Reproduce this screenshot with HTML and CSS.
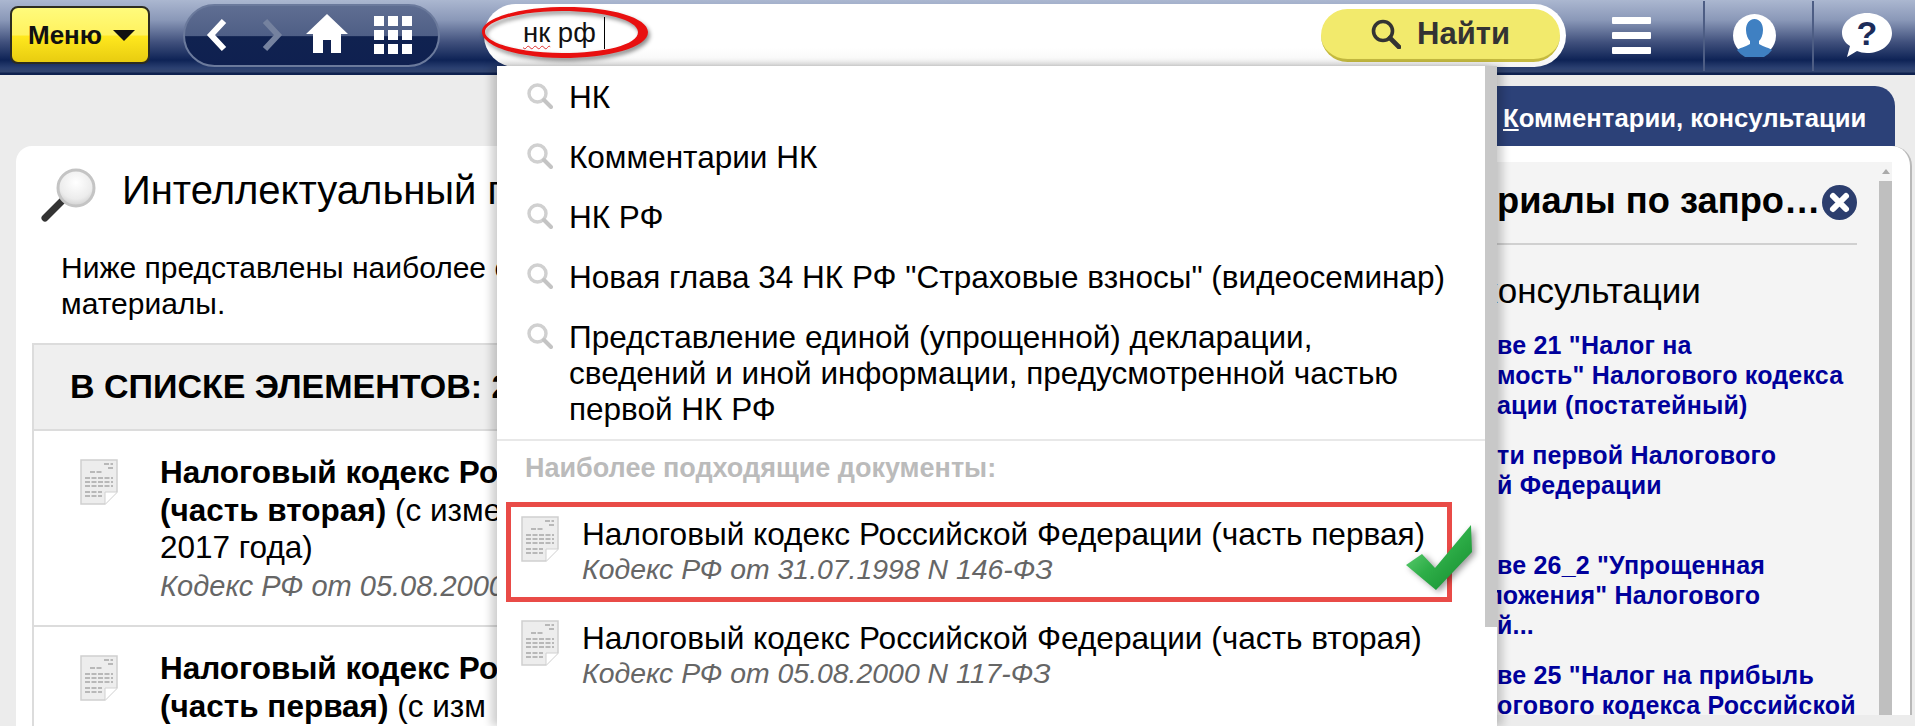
FILE: index.html
```html
<!DOCTYPE html>
<html lang="ru">
<head>
  <meta charset="UTF-8">
  <title>Интеллектуальный поиск</title>
  <link rel="stylesheet" href="styles.css">
</head>
<body>
  <header class="topbar">
    <button class="menu-btn">Меню <span class="menu-arrow"></span></button>

    <div class="nav-pill">
      <svg class="nav-icon back" viewBox="0 0 22 34"><path d="M18 3 L5 17 L18 31" fill="none" stroke="#fff" stroke-width="6"/></svg>
      <svg class="nav-icon fwd" viewBox="0 0 22 34"><path d="M4 3 L17 17 L4 31" fill="none" stroke="#75829f" stroke-width="6"/></svg>
      <svg class="nav-icon home" viewBox="0 0 42 39"><path d="M21 0 L42 20 L35 20 L35 39 L25 39 L25 26 L17 26 L17 39 L7 39 L7 20 L0 20 Z" fill="#fff"/></svg>
      <div class="grid-icon">
        <i></i><i></i><i></i><i></i><i></i><i></i><i></i><i></i><i></i>
      </div>
    </div>

    <div class="search-box">
      <div class="search-field"><span class="search-text">нк</span> рф<span class="search-caret"></span></div>
      <button class="find-btn">
        <svg class="find-icon" viewBox="0 0 30 30"><circle cx="12" cy="12" r="9.5" fill="none" stroke="#333" stroke-width="3.6"/><path d="M19 19 L28 28" stroke="#333" stroke-width="4.6" stroke-linecap="round"/></svg>
        Найти
      </button>
    </div>

    <div class="burger"><i></i><i></i><i></i></div>
    <div class="top-sep sep-first"></div>
    <svg class="user-icon" viewBox="0 0 43 43">
      <circle cx="21.5" cy="21.5" r="21.5" fill="#fff"/>
      <path d="M21.5 5 C27 5 30 10 30 16 C30 21 28 25 26 27 L26 30 C31 33 37 34 39 36 A21.5 21.5 0 0 1 4 36 C6 34 12 33 17 30 L17 27 C15 25 13 21 13 16 C13 10 16 5 21.5 5 Z" fill="#3f80c2"/>
    </svg>
    <div class="top-sep sep-second"></div>
    <svg class="help-icon" viewBox="0 0 50 44">
      <path d="M25 0 C39 0 50 9 50 20 C50 32 39 40 25 40 C21 40 18 39 15 38 L5 44 L8 33 C3 30 0 25 0 20 C0 9 11 0 25 0 Z" fill="#fff"/>
      <text x="25" y="32" text-anchor="middle" class="help-mark">?</text>
    </svg>
  </header>

  <main class="page">
    <section class="result-card">
      <div class="result-head">
        <svg class="big-lens" viewBox="0 0 57 54">
          <defs>
            <radialGradient id="glass" cx="50%" cy="35%" r="65%"><stop offset="0" stop-color="#fff"/><stop offset="0.7" stop-color="#ececec"/><stop offset="1" stop-color="#d0d0d0"/></radialGradient>
          </defs>
          <path d="M22 33 L5 50" stroke="#333" stroke-width="7" stroke-linecap="round"/>
          <circle cx="36" cy="20" r="18" fill="url(#glass)" stroke="#c4c4c4" stroke-width="3"/>
        </svg>
        <h1 class="result-title">Интеллектуальный п</h1>
      </div>
      <p class="result-intro">Ниже представлены наиболее с<br>материалы.</p>

      <div class="doc-table">
        <div class="doc-table-head">В СПИСКЕ ЭЛЕМЕНТОВ: 2</div>
        <div class="doc-row">
          <svg class="doc-icon row-icon" viewBox="0 0 38 46"><use href="#doc"/></svg>
          <div>
            <div class="doc-row-title"><b>Налоговый кодекс Ро<br>(часть вторая)</b> (с изме<br>2017 года)</div>
            <div class="doc-row-meta">Кодекс РФ от 05.08.2000</div>
          </div>
        </div>
        <div class="doc-row">
          <svg class="doc-icon row-icon" viewBox="0 0 38 46"><use href="#doc"/></svg>
          <div>
            <div class="doc-row-title"><b>Налоговый кодекс Ро<br>(часть первая)</b> (с изм</div>
          </div>
        </div>
      </div>
    </section>

    <aside class="side">
      <div class="side-tab"><span><u>К</u>омментарии, консультации</span></div>
      <div class="side-card">
        <div class="side-inner">
          <div class="side-content">
            <div class="side-head">
              <div class="side-title">риалы по запро…</div>
              <svg class="close-icon" viewBox="0 0 35 35">
                <circle cx="17.5" cy="17.5" r="17.5" fill="#2c3e6e"/>
                <path d="M11 11 L24 24 M24 11 L11 24" stroke="#fff" stroke-width="6" stroke-linecap="round"/>
              </svg>
            </div>
            <h2 class="side-section">консультации</h2>
            <a class="side-link">ве 21 "Налог на<br>мость" Налогового кодекса<br>ации (постатейный)</a>
            <a class="side-link">ти первой Налогового<br>й Федерации<br>&nbsp;</a>
            <a class="side-link">ве 26_2 "Упрощенная<br><span class="side-cut">ложения" Налогового</span><br>й...</a>
            <a class="side-link">ве 25 "Налог на прибыль<br>огового кодекса Российской</a>
          </div>
          <div class="side-scroll"><span class="side-scroll-up"></span><span class="side-scroll-thumb"></span></div>
        </div>
      </div>
    </aside>

    <div class="suggest">
      <div class="suggest-list">
        <div class="suggest-row"><svg class="lens" viewBox="0 0 26 26"><use href="#lens"/></svg><span>НК</span></div>
        <div class="suggest-row"><svg class="lens" viewBox="0 0 26 26"><use href="#lens"/></svg><span>Комментарии НК</span></div>
        <div class="suggest-row"><svg class="lens" viewBox="0 0 26 26"><use href="#lens"/></svg><span>НК РФ</span></div>
        <div class="suggest-row"><svg class="lens" viewBox="0 0 26 26"><use href="#lens"/></svg><span>Новая глава 34 НК РФ "Страховые взносы" (видеосеминар)</span></div>
        <div class="suggest-row"><svg class="lens" viewBox="0 0 26 26"><use href="#lens"/></svg><span>Представление единой (упрощенной) декларации,<br>сведений и иной информации, предусмотренной частью<br>первой НК РФ</span></div>
        <div class="suggest-label">Наиболее подходящие документы:</div>
        <div class="suggest-doc picked">
          <svg class="doc-icon" viewBox="0 0 38 46"><use href="#doc"/></svg>
          <div>
            <div class="suggest-doc-title">Налоговый кодекс Российской Федерации (часть первая)</div>
            <div class="suggest-doc-meta">Кодекс РФ от 31.07.1998 N 146-ФЗ</div>
          </div>
        </div>
        <div class="suggest-doc">
          <svg class="doc-icon" viewBox="0 0 38 46"><use href="#doc"/></svg>
          <div>
            <div class="suggest-doc-title">Налоговый кодекс Российской Федерации (часть вторая)</div>
            <div class="suggest-doc-meta">Кодекс РФ от 05.08.2000 N 117-ФЗ</div>
          </div>
        </div>
      </div>
      <div class="suggest-scroll"></div>
    </div>
  </main>

  <svg class="oval-mark" viewBox="0 0 180 60">
    <path fill-rule="evenodd" fill="#e81010" d="M4 27 C4 13 40 3 82 2 C130 1 170 12 170 27 C170 43 130 53 84 53 C40 53 4 41 4 27 Z M7 27 C7 38 42 48 84 48 C126 48 160 40 160 27 C160 15 126 6 84 6 C42 6 7 16 7 27 Z"/>
  </svg>

  <svg class="check-mark" viewBox="0 0 68 66">
    <defs>
      <linearGradient id="green" x1="0" y1="0" x2="1" y2="1"><stop offset="0" stop-color="#7be08a"/><stop offset="0.5" stop-color="#2eae48"/><stop offset="1" stop-color="#128a2c"/></linearGradient>
    </defs>
    <path d="M0 40 L16 29 L29 43 L65 0 L66 27 L30 65 Z" fill="url(#green)"/>
  </svg>

  <svg class="sprite">
    <symbol id="lens" viewBox="0 0 26 26">
      <circle cx="10.5" cy="10.5" r="8.5" fill="none" stroke="#d0d0d0" stroke-width="3.4"/>
      <path d="M17 17 L24 24" stroke="#c4c4c4" stroke-width="4" stroke-linecap="round"/>
    </symbol>
    <symbol id="doc" viewBox="0 0 38 46">
      <path d="M1 1 H37 V33 L25 45 H1 Z" fill="#ededed" stroke="#d0d0d0" stroke-width="1.5"/>
      <path d="M37 33 L25 33 L25 45" fill="#fff" stroke="#d0d0d0"/>
      <path d="M24 5 H33 M28 9 H33 M10 13 H22 M5 19 H33 M5 23 H33 M5 27 H33 M5 33 H22 M5 37 H22" stroke="#b8b8b8" stroke-width="2" stroke-dasharray="5 1.5"/>
    </symbol>
  </svg>
</body>
</html>
```

FILE: styles.css
```css
* {
  box-sizing: border-box;
}

html, body {
  margin: 0;
  padding: 0;
  height: 100%;
}

body {
  font-family: "Liberation Sans", Arial, sans-serif;
  background: #ececec;
  color: #000;
  height: 726px;
  overflow: hidden;
  position: relative;
}

/* top bar */

.topbar {
  height: 75px;
  padding: 0 0 5px 10px;
  display: flex;
  align-items: center;
  background: linear-gradient(to bottom, #abb7d0 0, #8a98b8 20px, #41517d 42px, #0e2356 60px, #2b4071 68px, #33466f 72px, #0f2250 73px);
}

.menu-btn {
  width: 140px;
  height: 58px;
  padding: 0 0 0 16px;
  display: flex;
  align-items: center;
  gap: 11px;
  border: 2px solid #2c2c20;
  border-radius: 8px;
  background: linear-gradient(to bottom, #fffb7c 0, #fff25e 50%, #ffe81e 52%, #e8cc10 100%);
  font-family: inherit;
  font-size: 26px;
  font-weight: 700;
  color: #111;
}

.menu-arrow {
  width: 0;
  height: 0;
  border-left: 11px solid transparent;
  border-right: 11px solid transparent;
  border-top: 11px solid #111;
}

.nav-pill {
  width: 257px;
  height: 63px;
  margin-left: 33px;
  display: flex;
  align-items: center;
  padding-left: 21px;
  border: 2px solid #6b7a9c;
  border-radius: 32px;
  background: linear-gradient(to bottom, #5f6e92 0, #4f5f86 50%, #102250 52%, #0f2050 100%);
}

.nav-icon {
  display: block;
}

.back, .fwd {
  width: 22px;
  height: 34px;
}

.fwd {
  margin-left: 33px;
}

.home {
  width: 42px;
  height: 39px;
  margin-left: 23px;
  margin-top: -3px;
}

.grid-icon {
  width: 38px;
  margin-left: 26px;
  display: grid;
  grid-template-columns: repeat(3, 10px);
  grid-auto-rows: 10px;
  gap: 4px;
}

.grid-icon i {
  background: #fff;
}

.search-box {
  width: 1082px;
  height: 63px;
  margin-left: 44px;
  display: flex;
  align-items: center;
  justify-content: space-between;
  padding: 0 6px 0 39px;
  border-radius: 32px;
  background: linear-gradient(to bottom, #fff 0, #fff 70%, #f4f4f4 100%);
}

.search-field {
  display: flex;
  align-items: center;
  font-size: 27.5px;
  white-space: pre;
  color: #111;
  margin-top: -4px;
}

.search-text {
  text-decoration: underline wavy #e03030 1px;
  text-underline-offset: 3px;
}

.search-caret {
  width: 1px;
  height: 32px;
  margin-left: 8px;
  background: #000;
}

.find-btn {
  width: 239px;
  height: 53px;
  display: flex;
  align-items: center;
  justify-content: center;
  gap: 16px;
  border: 0;
  border-bottom: 3px solid #c5ba40;
  border-radius: 27px;
  background: #f2ea6c;
  font-family: inherit;
  font-size: 31px;
  font-weight: 700;
  color: #333;
}

.find-icon {
  width: 30px;
  height: 30px;
}

.burger {
  width: 39px;
  margin-left: 46px;
  display: flex;
  flex-direction: column;
  gap: 8px;
}

.burger i {
  height: 7px;
  background: #fff;
  border-radius: 1px;
}

.top-sep {
  width: 2px;
  height: 70px;
  margin-top: 2px;
  background: #4d5d84;
}

.sep-first {
  margin-left: 52px;
}

.sep-second {
  margin-left: 36px;
}

.user-icon {
  width: 43px;
  height: 43px;
  margin-left: 28px;
}

.help-icon {
  width: 50px;
  height: 44px;
  margin-left: 28px;
}

.help-mark {
  font-size: 34px;
  font-weight: 700;
  fill: #1c2c5a;
}

/* page */

.page {
  display: flex;
  align-items: flex-start;
  height: 651px;
  position: relative;
}

.result-card {
  width: 1224px;
  height: 580px;
  margin: 71px 0 0 16px;
  padding: 22px 16px 0;
  background: #fff;
  border-radius: 16px 0 0 0;
  flex: none;
  overflow: hidden;
}

.result-head {
  display: flex;
  align-items: flex-start;
  gap: 25px;
  padding-left: 8px;
}

.big-lens {
  width: 57px;
  height: 54px;
  flex: none;
}

.result-title {
  margin: -5px 0 0;
  font-size: 40px;
  font-weight: 400;
  line-height: 54px;
  white-space: nowrap;
}

.result-intro {
  margin: 28px 0 21px 29px;
  font-size: 30px;
  line-height: 36px;
  white-space: nowrap;
}

.doc-table {
  border-left: 2px solid #dcdcdc;
}

.doc-table-head {
  padding: 23px 36px 25px;
  background: #efefef;
  border: 2px solid #dcdcdc;
  border-left: 0;
  font-size: 34px;
  font-weight: 700;
  line-height: 36px;
  white-space: nowrap;
}

.doc-row {
  height: 196px;
  display: flex;
  align-items: flex-start;
  padding: 23px 0 0 46px;
  gap: 42px;
  border-bottom: 2px solid #dcdcdc;
}

.doc-icon {
  width: 38px;
  height: 46px;
  flex: none;
}

.row-icon {
  margin-top: 5px;
}

.doc-row-title {
  font-size: 31.5px;
  line-height: 37.5px;
  white-space: nowrap;
}

.doc-row-meta {
  margin-top: 2px;
  font-size: 29px;
  font-style: italic;
  line-height: 34px;
  color: #666;
  white-space: nowrap;
}

/* right column */

.side {
  width: 675px;
  flex: none;
  padding-top: 11px;
}

.side-tab {
  height: 60px;
  margin-right: 20px;
  padding: 4px 0 0 263px;
  display: flex;
  align-items: center;
  background: #2c4178;
  border-radius: 0 20px 0 0;
  color: #fff;
  font-size: 25.7px;
  font-weight: 700;
}

.side-card {
  height: 569px;
  margin-right: 3px;
  padding: 16px 18px 0 0;
  background: #fff;
  border-right: 2px solid #b8b8b8;
  border-radius: 0 20px 0 0;
}

.side-inner {
  height: 100%;
  display: flex;
  background: #f4f4f4;
}

.side-content {
  width: 639px;
  padding: 0 22px 0 257px;
  flex: none;
}

.side-head {
  height: 83px;
  display: flex;
  align-items: flex-start;
  justify-content: space-between;
  border-bottom: 2px solid #d0d0d0;
}

.side-title {
  margin-top: 17px;
  font-size: 36.3px;
  font-weight: 700;
  line-height: 44px;
  white-space: nowrap;
}

.close-icon {
  width: 35px;
  height: 35px;
  margin-top: 23px;
  flex: none;
}

.side-section {
  margin: 28px 0 21px -15px;
  font-size: 35px;
  font-weight: 400;
  line-height: 36px;
  white-space: nowrap;
}

.side-link {
  display: block;
  margin-bottom: 20px;
  font-size: 25px;
  font-weight: 700;
  line-height: 30px;
  letter-spacing: 0.2px;
  color: #00009c;
  white-space: nowrap;
}

.side-cut {
  margin-left: -10px;
}

.side-scroll {
  width: 13px;
  flex: none;
  display: flex;
  flex-direction: column;
  align-items: center;
}

.side-scroll-up {
  width: 0;
  height: 0;
  margin: 7px 0 7px;
  border-left: 4px solid transparent;
  border-right: 4px solid transparent;
  border-bottom: 5px solid #aaa;
}

.side-scroll-thumb {
  width: 100%;
  flex: 1;
  background: #bfbfbf;
}

/* suggestions dropdown */

.suggest {
  position: absolute;
  left: 497px;
  top: -9px;
  bottom: 0;
  width: 1000px;
  display: flex;
  align-items: flex-start;
  background: #fff;
  box-shadow: -6px 0 8px rgba(0, 0, 0, 0.18), 6px 0 8px rgba(0, 0, 0, 0.18);
}

.suggest-list {
  flex: 1;
  min-width: 0;
  padding-top: 1px;
}

.suggest-scroll {
  width: 12px;
  height: 561px;
  flex: none;
  background: #c8c8c8;
}

.suggest-row {
  display: flex;
  align-items: flex-start;
  gap: 16px;
  padding: 12px 0 12px 30px;
  font-size: 31.5px;
  line-height: 36px;
}

.lens {
  width: 26px;
  height: 26px;
  flex: none;
  margin-top: 4px;
}

.suggest-label {
  padding: 12px 0 19px 28px;
  border-top: 2px solid #e8e8e8;
  font-size: 27px;
  font-weight: 700;
  line-height: 30px;
  color: #bbb;
}

.suggest-doc {
  width: 946px;
  height: 100px;
  margin: 0 0 4px 9px;
  padding: 9px 0 0 10px;
  display: flex;
  align-items: flex-start;
  gap: 23px;
  border: 5px solid transparent;
}

.suggest-doc.picked {
  border-color: #e94b47;
}

.suggest-doc-title {
  font-size: 31.6px;
  line-height: 36px;
  white-space: nowrap;
}

.suggest-doc-meta {
  font-size: 28.4px;
  font-style: italic;
  line-height: 34px;
  color: #666;
  white-space: nowrap;
}

/* hand-drawn marks on top of the screenshot */

.oval-mark {
  position: absolute;
  left: 478px;
  top: 5px;
  width: 180px;
  height: 60px;
  filter: drop-shadow(2px 3px 2px rgba(0, 0, 0, 0.45));
}

.check-mark {
  position: absolute;
  left: 1406px;
  top: 525px;
  width: 68px;
  height: 66px;
  filter: drop-shadow(3px 2px 3px rgba(0, 0, 0, 0.4));
}

.sprite {
  position: absolute;
  width: 0;
  height: 0;
}
```
